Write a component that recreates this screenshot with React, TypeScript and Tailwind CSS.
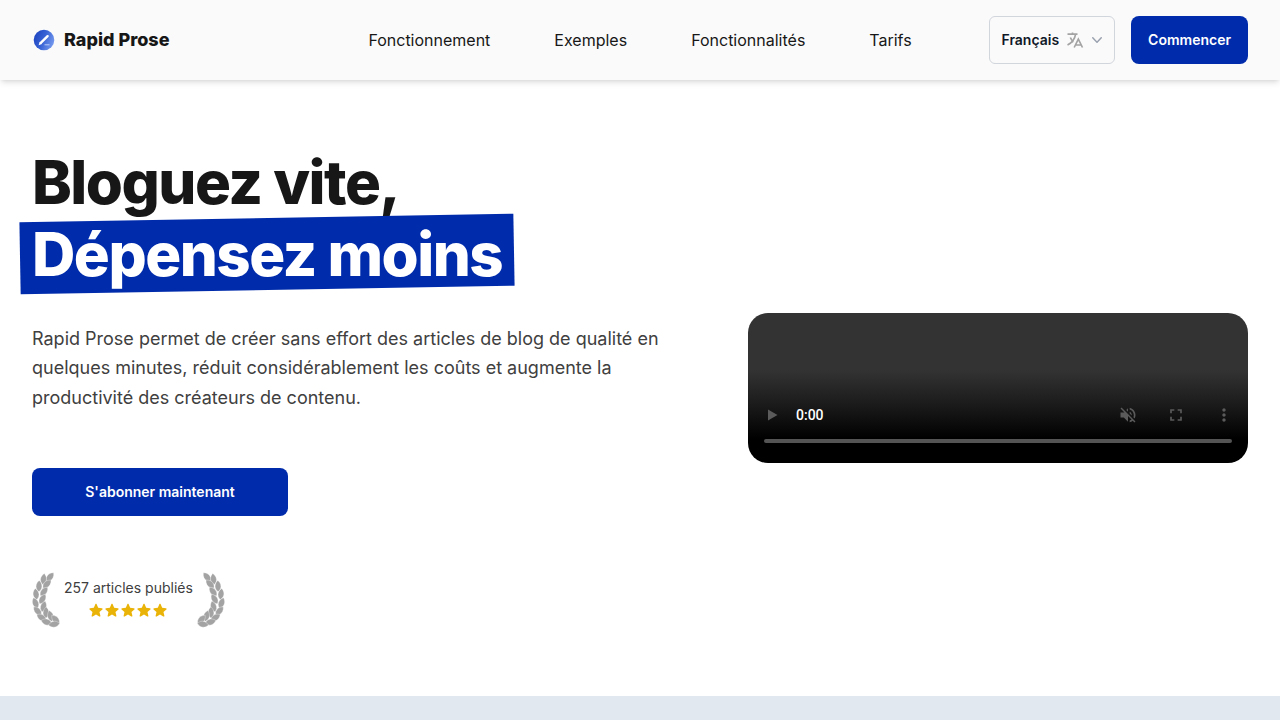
import { useState } from 'react';

const links = [
  { label: 'Fonctionnement', href: '#how-it-works' },
  { label: 'Exemples', href: '#examples' },
  { label: 'Fonctionnalités', href: '#features' },
  { label: 'Tarifs', href: '#pricing' },
];

// x, y and rotation of each leaf on the left branch
const leaves = [
  [18, 5, 40],
  [11.5, 7, 8],
  [15, 12, 46],
  [7, 14, 2],
  [12, 19.5, 40],
  [4, 22, -8],
  [10.5, 27, 32],
  [3.5, 31, -22],
  [11.5, 34.5, 16],
  [5.5, 39, -42],
  [14, 40.5, 2],
  [9.5, 45.5, -58],
  [18.5, 44, -14],
  [14.5, 50, -74],
  [23.5, 47.5, -42],
  [22, 52.2, -98],
];

function Laurel({ flip = false }: { flip?: boolean }) {
  return (
    <svg viewBox="0 0 28 56" className="h-14 w-7 text-[#a3a3a3]" fill="currentColor" aria-hidden="true">
      <g transform={flip ? 'translate(28 0) scale(-1 1)' : undefined} stroke="#fff" strokeWidth="0.3">
        {leaves.map(([x, y, angle], index) => (
          <path
            key={index}
            d="M0-5.6C2.8-3.2 3.6 0 2.4 2.8 1.6 4.2.8 5 0 5.6-.8 5-1.6 4.2-2.4 2.8-3.6 0-2.8-3.2 0-5.6Z"
            transform={`translate(${x} ${y}) rotate(${angle})`}
          />
        ))}
      </g>
    </svg>
  );
}

function Logo() {
  return (
    <svg viewBox="0 0 24 24" className="size-6" aria-hidden="true">
      <defs>
        <linearGradient id="logo-fill" x1="0" y1="0.2" x2="1" y2="0.6">
          <stop offset="0" stopColor="#1c43c0" />
          <stop offset="0.5" stopColor="#3762d4" />
          <stop offset="1" stopColor="#7599ee" />
        </linearGradient>
      </defs>
      <circle cx="12" cy="12" r="10.3" fill="url(#logo-fill)" />
      <path d="M8.8 14.8 15.6 8.2" stroke="#fff" strokeWidth="2.4" strokeLinecap="round" />
      <path d="m6.6 17.2 1.2-3.4 2.2 2.2Z" fill="#fff" />
      <path d="M12.5 16.8h5" stroke="#d5e0ff" strokeWidth="0.8" />
    </svg>
  );
}

function Header() {
  const [language, setLanguage] = useState('fr');

  return (
    <header className="relative bg-[#fafafa] shadow-md">
      <div className="flex h-20 items-center px-8">
        <div className="flex flex-1">
          <a href="#home" className="flex items-center gap-2 text-lg font-extrabold">
            <Logo />
            Rapid Prose
          </a>
        </div>

        <nav className="flex items-center gap-16">
          {links.map((link) => (
            <a key={link.href} href={link.href}>
              {link.label}
            </a>
          ))}
        </nav>

        <div className="flex flex-1 items-center justify-end gap-4">
          <div className="flex h-12 items-center rounded-md border border-gray-300 bg-[#fafafa] pr-[7px] pl-[11px] text-gray-400">
            <select
              aria-label="Langue"
              value={language}
              onChange={(e) => setLanguage(e.target.value)}
              className="field-sizing-content appearance-none text-sm font-semibold text-gray-900"
            >
              <option value="fr">Français</option>
              <option value="en">English</option>
            </select>
            <svg viewBox="0 0 24 24" className="ml-1.5 size-5" fill="none" stroke="#a3a3a3" strokeWidth="2" aria-hidden="true">
              <path d="M3 5h12M9 3v2m1.048 9.5A18.022 18.022 0 0 1 6.412 9m6.088 9h7M11 21l5-10 5 10M12.751 5C11.783 10.77 8.07 15.61 3 18.129" />
            </svg>
            <svg viewBox="0 0 20 20" className="ml-0.5 size-5" fill="currentColor" aria-hidden="true">
              <path fillRule="evenodd" d="M5.23 7.21a.75.75 0 0 1 1.06.02L10 11.168l3.71-3.938a.75.75 0 1 1 1.08 1.04l-4.25 4.5a.75.75 0 0 1-1.08 0l-4.25-4.5a.75.75 0 0 1 .02-1.06Z" />
            </svg>
          </div>
          <button type="button" className="h-12 rounded-lg bg-[#002cac] px-[17px] text-sm font-semibold text-white">
            Commencer
          </button>
        </div>
      </div>
    </header>
  );
}

function VideoPlayer() {
  return (
    <div className="flex h-[150px] flex-col justify-end rounded-[20px] bg-linear-to-b/srgb from-[#333] from-38% via-[#1c1c1c] via-60% to-black to-84% px-4 pb-5 text-[#5b5b5b]">
      <div className="flex h-12 items-center justify-between">
        <div className="flex items-center">
          <button type="button" aria-label="Lecture" className="mr-4 flex w-4 justify-center">
            <svg viewBox="0 0 16 16" className="size-4" fill="currentColor">
              <path d="M4 2.5v11L13.5 8Z" />
            </svg>
          </button>
          <span className="font-['Roboto',sans-serif] text-sm font-medium text-white">0:00</span>
        </div>
        <div className="flex items-center gap-7">
          <button type="button" aria-label="Activer le son">
            <svg viewBox="0 0 24 24" className="size-5" fill="currentColor">
              <path d="M16.5 12c0-1.77-1.02-3.29-2.5-4.03v2.21l2.45 2.45c.03-.2.05-.41.05-.63zm2.5 0c0 .94-.2 1.82-.54 2.64l1.51 1.51C20.63 14.91 21 13.5 21 12c0-4.28-2.99-7.86-7-8.77v2.06c2.89.86 5 3.54 5 6.71zM4.27 3 3 4.27 7.73 9H3v6h4l5 5v-6.73l4.25 4.25c-.67.52-1.42.93-2.25 1.18v2.06c1.38-.31 2.63-.95 3.69-1.81L19.73 21 21 19.73l-9-9L4.27 3zM12 4 9.91 6.09 12 8.18V4z" />
            </svg>
          </button>
          <button type="button" aria-label="Plein écran">
            <svg viewBox="0 0 24 24" className="size-5" fill="currentColor">
              <path d="M7 14H5v5h5v-2H7v-3zm-2-4h2V7h3V5H5v5zm12 7h-3v2h5v-5h-2v3zM14 5v2h3v3h2V5h-5z" />
            </svg>
          </button>
          <button type="button" aria-label="Plus d'options" className="-mr-0.5">
            <svg viewBox="0 0 24 24" className="size-5" fill="currentColor">
              <path d="M12 8c1.1 0 2-.9 2-2s-.9-2-2-2-2 .9-2 2 .9 2 2 2zm0 2c-1.1 0-2 .9-2 2s.9 2 2 2 2-.9 2-2-.9-2-2-2zm0 6c-1.1 0-2 .9-2 2s.9 2 2 2 2-.9 2-2-.9-2-2-2z" />
            </svg>
          </button>
        </div>
      </div>
      <input
        type="range"
        aria-label="Progression"
        min={0}
        max={100}
        defaultValue={0}
        className="h-1 w-full appearance-none rounded-full bg-[#545454] [&::-webkit-slider-thumb]:size-0 [&::-webkit-slider-thumb]:appearance-none"
      />
    </div>
  );
}

export default function App() {
  return (
    <div className="bg-white font-['Inter',sans-serif] text-[#171717]">
      <Header />

      <main>
        <section className="flex items-center gap-20 px-8 py-[66px]">
          <div className="flex-1">
            <h1 className="mb-[34px] text-6xl leading-[72px] font-extrabold tracking-tight">
              Bloguez vite,
              <br />
              <span className="relative inline-block text-white">
                <span className="absolute inset-y-0 -inset-x-3 -rotate-1 bg-[#002cac]" />
                <span className="relative whitespace-nowrap">Dépensez moins</span>
              </span>
            </h1>
            <p className="mb-14 text-lg leading-relaxed text-[#404040]">
              Rapid Prose permet de créer sans effort des articles de blog de qualité en quelques minutes, réduit
              considérablement les coûts et augmente la productivité des créateurs de contenu.
            </p>
            <button type="button" className="mb-14 h-12 w-64 rounded-lg bg-[#002cac] text-sm font-semibold text-white">
              S'abonner maintenant
            </button>

            <div className="flex items-center gap-1 pb-0.5">
              <Laurel />
              <div className="flex flex-col items-center gap-1 pb-1">
                <span className="text-sm text-[#404040]">257 articles publiés</span>
                <div className="flex" role="img" aria-label="5 étoiles sur 5">
                  {[1, 2, 3, 4, 5].map((star) => (
                    <svg key={star} viewBox="0 0 20 20" className="size-4 text-[#eab308]" fill="currentColor">
                      <path fillRule="evenodd" d="M10.868 2.884c-.321-.772-1.415-.772-1.736 0l-1.83 4.401-4.753.381c-.833.067-1.171 1.107-.536 1.651l3.62 3.102-1.106 4.637c-.194.813.691 1.456 1.405 1.02L10 15.591l4.069 2.485c.713.436 1.598-.207 1.404-1.02l-1.106-4.637 3.62-3.102c.635-.544.297-1.584-.536-1.65l-4.752-.382-1.831-4.401Z" />
                    </svg>
                  ))}
                </div>
              </div>
              <Laurel flip />
            </div>
          </div>

          <div className="w-[500px] shrink-0">
            <VideoPlayer />
          </div>
        </section>

        <section className="h-6 bg-slate-200" />
      </main>
    </div>
  );
}
